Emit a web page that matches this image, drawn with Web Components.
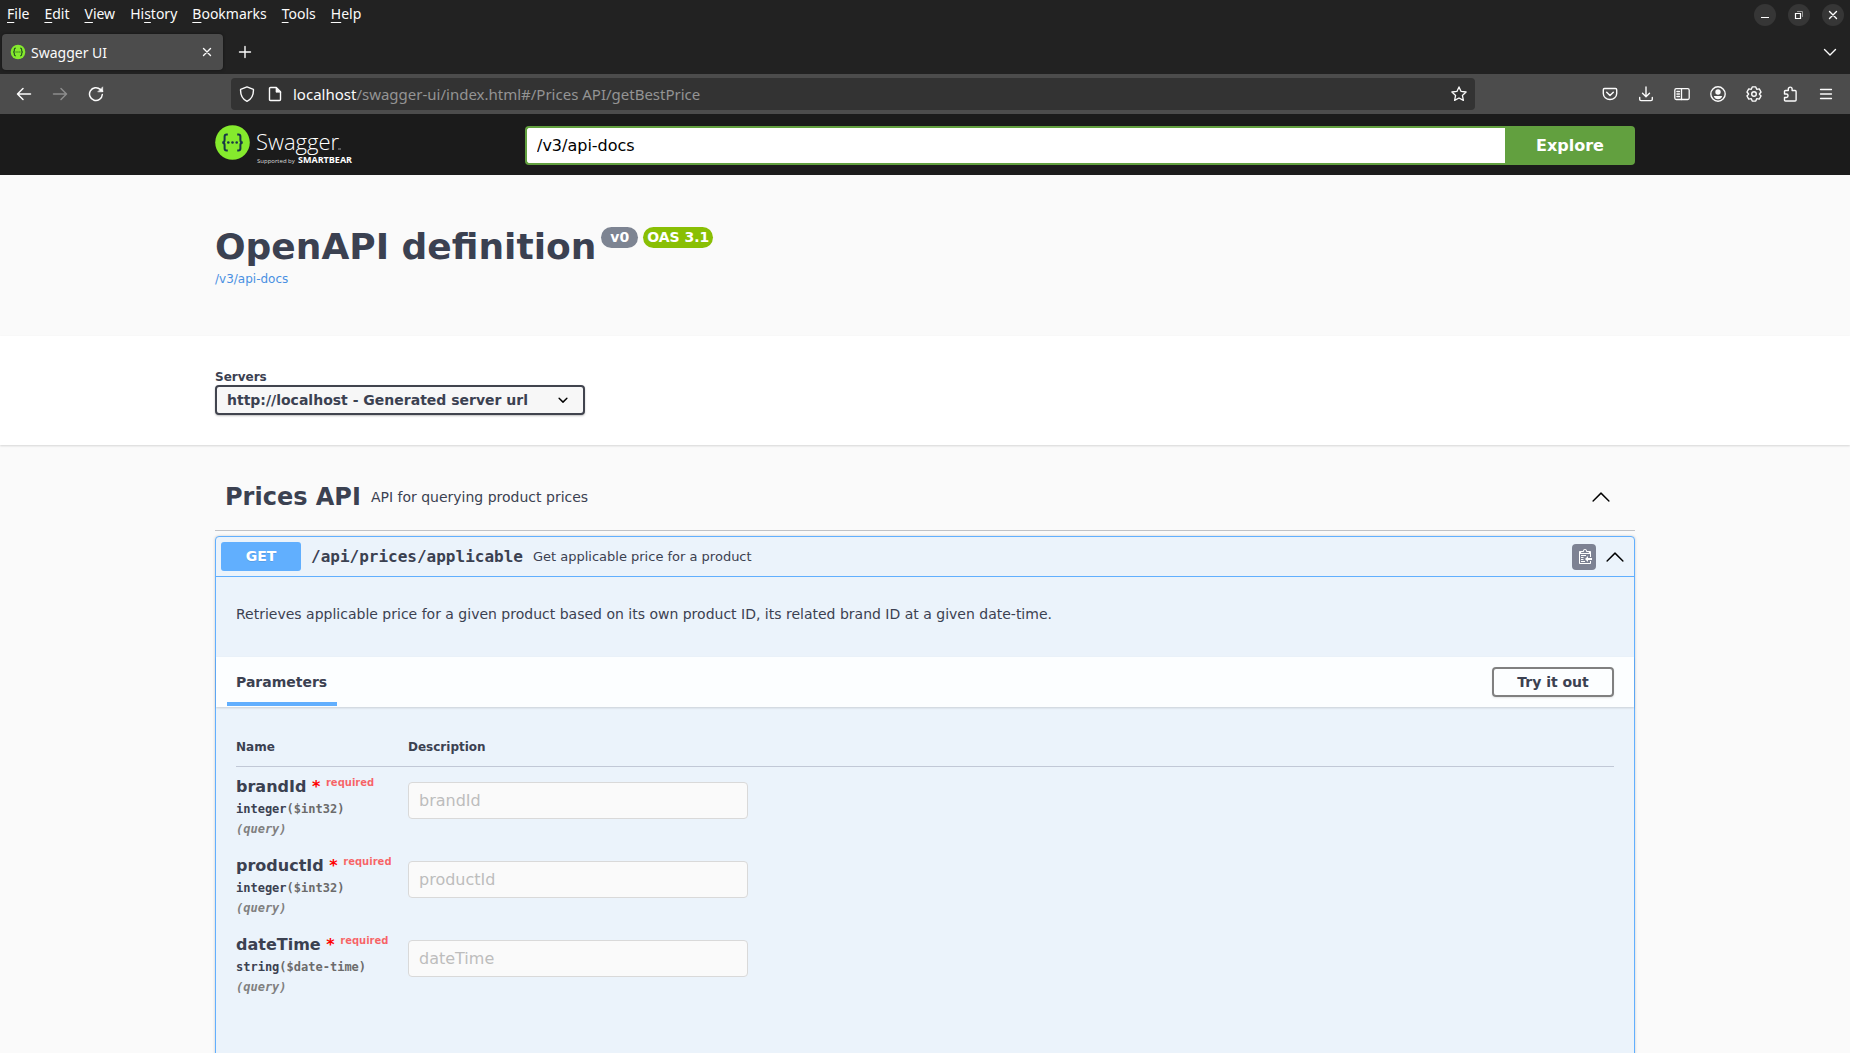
<!DOCTYPE html>
<html lang="en">
<head>
<meta charset="utf-8">
<title>Swagger UI</title>
<style>
  html, body { margin: 0; height: 100%; overflow: hidden; background: #fafafa; }
  body { font-family: "DejaVu Sans", sans-serif; color: #3b4151; }
</style>
</head>
<body>
<browser-window>
  <browser-menu slot="chrome"></browser-menu>
  <browser-tabs slot="chrome">Swagger UI</browser-tabs>
  <browser-toolbar slot="chrome"></browser-toolbar>
  <swagger-topbar></swagger-topbar>
  <api-info>OpenAPI definition</api-info>
  <server-picker></server-picker>
  <api-tag>
    <span slot="name">Prices API</span>
    <span slot="about">API for querying product prices</span>
    <api-operation>
      <span slot="path">/api/prices/applicable</span>
      <span slot="summary">Get applicable price for a product</span>
      <span slot="about">Retrieves applicable price for a given product based on its own product ID, its related brand ID at a given date-time.</span>
    </api-operation>
  </api-tag>
</browser-window>

<template id="browser-window">
  <style>
    :host { display: flex; flex-direction: column; height: 100vh; overflow: hidden; }
    header { flex: none; background: #222; color: #fbfbfb; font-family: "Noto Sans", sans-serif; }
    main { flex: 1; min-height: 0; overflow: hidden; background: #fafafa; }
  </style>
  <header><slot name="chrome"></slot></header>
  <main><slot></slot></main>
</template>

<template id="browser-menu">
  <style>
    :host { display: flex; justify-content: space-between; align-items: center; height: 30px; padding: 0 6px; font-size: 14px; }
    nav, div { display: flex; }
    nav { gap: 15px; padding: 0 0 2px 1px; }
    div { gap: 12px; }
    a { color: inherit; text-decoration: none; line-height: 20px; }
    u { text-underline-offset: 3px; text-decoration-thickness: 1px; }
    button { width: 22px; height: 22px; padding: 0; border: 0; border-radius: 50%; background: #363636; color: #fff; display: grid; place-items: center; }
  </style>
  <nav>
    <a href="#"><u>F</u>ile</a><a href="#"><u>E</u>dit</a><a href="#"><u>V</u>iew</a><a href="#">Hi<u>s</u>tory</a><a href="#"><u>B</u>ookmarks</a><a href="#"><u>T</u>ools</a><a href="#"><u>H</u>elp</a>
  </nav>
  <div>
    <button aria-label="Minimize"><ui-icon name="minimize"></ui-icon></button>
    <button aria-label="Restore"><ui-icon name="restore"></ui-icon></button>
    <button aria-label="Close"><ui-icon name="close"></ui-icon></button>
  </div>
</template>

<template id="browser-tabs">
  <style>
    :host { display: flex; align-items: center; height: 44px; padding: 0 8px 0 2px; font-size: 14px; }
    .tab { display: flex; align-items: center; box-sizing: border-box; width: 221px; height: 36px; padding: 0 4px 0 8px; border-radius: 4px; background: #4c4c4c; box-shadow: 0 0 3px rgba(0,0,0,.5); }
    .title { flex: 1; padding-left: 5px; }
    button { width: 24px; height: 24px; padding: 0; border: 0; background: none; color: #fbfbfb; display: grid; place-items: center; }
    .new { margin-left: 10px; }
    .all { margin-left: auto; }
  </style>
  <div class="tab">
    <ui-icon name="favicon"></ui-icon>
    <span class="title"><slot></slot></span>
    <button aria-label="Close tab"><ui-icon name="close"></ui-icon></button>
  </div>
  <button class="new" aria-label="New tab"><ui-icon name="plus"></ui-icon></button>
  <button class="all" aria-label="List all tabs"><ui-icon name="down"></ui-icon></button>
</template>

<template id="browser-toolbar">
  <style>
    :host { display: flex; align-items: center; height: 40px; padding: 0 6px; background: #4c4c4c; }
    button { flex: none; width: 36px; height: 32px; padding: 0; border: 0; background: none; color: #fbfbfb; display: grid; place-items: center; }
    button:disabled { color: #8c8c8c; }
    .address { flex: 1; display: flex; align-items: center; height: 32px; margin: 0 117px; padding-left: 2px; border-radius: 4px; background: #333; font-size: 15px; }
    .address button { width: 28px; }
    .address .star { width: 32px; }
    .url { flex: 1; padding-left: 4px; color: #949494; white-space: nowrap; }
    b { font-weight: 400; color: #fbfbfb; }
  </style>
  <button aria-label="Back"><ui-icon name="back"></ui-icon></button>
  <button aria-label="Forward" disabled><ui-icon name="forward"></ui-icon></button>
  <button aria-label="Reload"><ui-icon name="reload"></ui-icon></button>
  <div class="address">
    <button aria-label="Tracking protection"><ui-icon name="shield"></ui-icon></button>
    <button aria-label="Site information"><ui-icon name="page"></ui-icon></button>
    <span class="url"><b>localhost</b>/swagger-ui/index.html#/Prices API/getBestPrice</span>
    <button class="star" aria-label="Bookmark"><ui-icon name="star"></ui-icon></button>
  </div>
  <button aria-label="Pocket"><ui-icon name="pocket"></ui-icon></button>
  <button aria-label="Downloads"><ui-icon name="download"></ui-icon></button>
  <button aria-label="Sidebar"><ui-icon name="sidebar"></ui-icon></button>
  <button aria-label="Account"><ui-icon name="account"></ui-icon></button>
  <button aria-label="Settings"><ui-icon name="gear"></ui-icon></button>
  <button aria-label="Extensions"><ui-icon name="puzzle"></ui-icon></button>
  <button aria-label="Menu"><ui-icon name="menu"></ui-icon></button>
</template>

<template id="swagger-topbar">
  <style>
    :host { display: block; background: #1b1b1b; padding: 11px 0 10px; }
    .wrap { display: flex; align-items: flex-end; box-sizing: border-box; max-width: 1460px; margin: 0 auto; padding: 0 20px; }
    .logo { flex: none; width: 310px; height: 40px; }
    .logo svg { display: block; }
    form { flex: 1; display: flex; }
    input { flex: 1; min-width: 0; box-sizing: border-box; height: 39px; margin: 0; padding: 0 10px; border: 2px solid #62a03f; border-right: 0; border-radius: 4px 0 0 4px; background: #fff; color: #000; font: 16px "DejaVu Sans", sans-serif; outline: none; }
    button { width: 130px; border: 0; border-radius: 0 4px 4px 0; background: #62a03f; color: #fff; font: bold 16px "DejaVu Sans", sans-serif; }
  </style>
  <div class="wrap">
    <a class="logo" href="#" aria-label="Swagger">
      <svg width="150" height="42" viewBox="0 0 150 42">
        <circle cx="17.5" cy="17.5" r="17.3" fill="#85ea2d"/>
        <g fill="none" stroke="#173647" stroke-width="2">
          <path d="M12.8 9.6h-1.2q-2 0-2 2v3.400q0 2.500-2.400 2.500q2.400 0 2.400 2.500v3.400q0 2 2 2h1.200"/>
          <path d="M22.200 9.600h1.200q2 0 2 2v3.400q0 2.500 2.400 2.500q-2.400 0-2.400 2.500v3.400q0 2-2 2h-1.200"/>
        </g>
        <g fill="#173647"><circle cx="13.300" cy="17.500" r="1.300"/><circle cx="17.500" cy="17.500" r="1.300"/><circle cx="21.700" cy="17.500" r="1.300"/></g>
        <g fill="#fff" font-family="Open Sans, sans-serif">
          <text x="41" y="25" font-size="22" font-weight="300">Swagger</text>
          <text x="42" y="38" font-size="6" fill="#ddd">Supported by</text>
          <text x="83" y="38" font-size="9" font-weight="700">SMARTBEAR</text>
        </g>
        <path d="M123 24h3" stroke="#999"/>
      </svg>
    </a>
    <form onsubmit="return false">
      <input type="text" aria-label="API definition URL" value="/v3/api-docs">
      <button>Explore</button>
    </form>
  </div>
</template>

<template id="api-info">
  <style>
    :host { display: block; box-sizing: border-box; max-width: 1460px; margin: 0 auto; padding: 51px 20px 49px; }
    .title { display: flex; align-items: flex-start; gap: 5px; }
    h2 { margin: 0; font-size: 36px; line-height: 42px; }
    .pill { margin-top: 1px; border-radius: 11px; padding: 0 9px; background: #7d8492; color: #fff; font-size: 14px; font-weight: 700; line-height: 21px; }
    .oas { background: #89bf04; padding: 0 4px; }
    a { display: block; margin-top: 4px; color: #4990e2; font-size: 12px; line-height: 15px; text-decoration: none; }
  </style>
  <div class="title"><h2><slot></slot></h2><span class="pill">v0</span><span class="pill oas">OAS 3.1</span></div>
  <a href="#">/v3/api-docs</a>
</template>

<template id="server-picker">
  <style>
    :host { display: block; background: #fff; box-shadow: 0 1px 2px rgba(0,0,0,.15); padding: 34px 0 30px; }
    .wrap { box-sizing: border-box; max-width: 1460px; margin: 0 auto; padding: 0 20px; }
    label { display: block; font-size: 12px; font-weight: 700; line-height: 15px; }
    .select { display: inline-grid; vertical-align: top; align-items: center; }
    select, ui-icon { grid-area: 1 / 1; }
    select { appearance: none; box-sizing: border-box; height: 30px; margin: 0; padding: 0 54px 0 10px; border: 2px solid #41444e; border-radius: 4px; background: #f7f7f7; box-shadow: 0 1px 2px rgba(0,0,0,.25); color: #3b4151; font: bold 14px "DejaVu Sans", sans-serif; }
    ui-icon { justify-self: end; margin-right: 12px; color: #000; pointer-events: none; }
  </style>
  <div class="wrap">
    <label for="server">Servers</label>
    <div class="select">
      <select id="server"><option>http://localhost - Generated server url</option></select>
      <ui-icon name="select"></ui-icon>
    </div>
  </div>
</template>

<template id="api-tag">
  <style>
    :host { display: block; box-sizing: border-box; max-width: 1460px; margin: 0 auto; padding: 18px 20px 0; }
    .head { display: flex; align-items: center; gap: 10px; height: 67px; padding: 0 24px 0 10px; border-bottom: 1px solid rgba(59,65,81,.3); margin-bottom: 5px; }
    h3 { margin: 0; font-size: 24px; }
    small { flex: 1; font-size: 14px; }
    button { padding: 0; border: 0; background: none; color: #000; }
  </style>
  <div class="head">
    <h3><slot name="name"></slot></h3>
    <small><slot name="about"></slot></small>
    <button aria-label="Collapse section"><ui-icon name="up"></ui-icon></button>
  </div>
  <slot></slot>
</template>

<template id="api-operation">
  <style>
    :host { display: block; border: 1px solid #61affe; border-radius: 4px; background: #ebf3fb; box-shadow: 0 0 3px rgba(0,0,0,.19); padding-bottom: 120px; }
    .summary { display: flex; align-items: center; gap: 10px; padding: 5px 9px 5px 5px; border-bottom: 1px solid #61affe; }
    .method { width: 80px; border-radius: 3px; background: #61affe; color: #fff; font-size: 14px; font-weight: 700; line-height: 29px; text-align: center; text-shadow: 0 1px 0 rgba(0,0,0,.1); }
    .path { font: bold 16px "DejaVu Sans Mono", monospace; }
    .what { flex: 1; font-size: 13px; }
    .actions { display: flex; align-items: center; gap: 9px; }
    .actions button { padding: 0; border: 0; background: none; color: #000; }
    .actions .copy { display: grid; place-items: center; width: 24px; height: 26px; border-radius: 4px; background: #7d8293; color: #fff; }
    .about { margin: 0; padding: 29px 20px 35px; font-size: 14px; line-height: 16px; }
    .bar { display: flex; justify-content: space-between; align-items: center; height: 49px; padding: 0 20px 1px 11px; background: rgba(255,255,255,.85); box-shadow: 0 1px 2px rgba(0,0,0,.15); }
    h4 { align-self: stretch; margin: 0; padding: 0 10px 0 9px; font-size: 14px; line-height: 50px; box-shadow: inset 0 -4px #61affe; }
    .try { width: 122px; height: 30px; padding: 0; border: 2px solid gray; border-radius: 4px; background: transparent; box-shadow: 0 1px 2px rgba(0,0,0,.1); color: #3b4151; font: bold 14px "DejaVu Sans", sans-serif; }
    .params { padding: 33px 20px 0; }
    table { width: 100%; border-collapse: collapse; }
    th { padding: 0 0 12px; border-bottom: 1px solid #c1c8d6; font-size: 12px; line-height: 14px; text-align: left; }
    th:first-child { width: 172px; }
    td { padding: 10px 0 0; height: 69px; vertical-align: top; }
    label { display: block; font-size: 16px; font-weight: 700; line-height: 19px; white-space: nowrap; }
    i { color: red; font-style: normal; }
    sup { color: rgba(255,0,0,.6); font-size: 10px; line-height: 10px; vertical-align: 6px; }
    .type, .in { font: bold 12px/14px "DejaVu Sans Mono", monospace; }
    .type { padding: 6px 0; }
    .type span { color: #6b6b6b; }
    .in { color: #808080; font-style: italic; }
    input { display: block; box-sizing: border-box; width: 340px; height: 37px; margin: 5px 0 0; padding: 0 10px; border: 1px solid #d9d9d9; border-radius: 4px; background: #fafafa; font: 16px "DejaVu Sans", sans-serif; }
    input::placeholder { color: #bdbdbd; opacity: 1; }
  </style>
  <div class="summary">
    <span class="method">GET</span>
    <span class="path"><slot name="path"></slot></span>
    <span class="what"><slot name="summary"></slot></span>
    <div class="actions">
      <button class="copy" aria-label="Copy to clipboard"><ui-icon name="clipboard"></ui-icon></button>
      <button aria-label="Collapse operation"><ui-icon name="up"></ui-icon></button>
    </div>
  </div>
  <p class="about"><slot name="about"></slot></p>
  <div class="bar"><h4>Parameters</h4><button class="try">Try it out</button></div>
  <div class="params">
    <table>
      <thead><tr><th>Name</th><th>Description</th></tr></thead>
      <tbody></tbody>
    </table>
  </div>
</template>

<script>
const line = (size, body, width = 1.3) =>
  `<svg width="${size}" height="${size}" viewBox="0 0 ${size} ${size}" fill="none" stroke="currentColor" stroke-width="${width}" stroke-linecap="round" stroke-linejoin="round">${body}</svg>`;
const solid = (w, h, body) =>
  `<svg width="${w}" height="${h}" viewBox="0 0 ${w} ${h}" fill="currentColor">${body}</svg>`;

const gearPath = (() => {
  const pts = [];
  for (let i = 0; i < 6; i++) {
    for (const [offset, radius] of [[-30, 5.4], [-14, 7.3], [14, 7.3]]) {
      const a = (i * 60 + offset - 90) * Math.PI / 180;
      pts.push(`${(8 + radius * Math.cos(a)).toFixed(2)} ${(8 + radius * Math.sin(a)).toFixed(2)}`);
    }
  }
  return `M${pts.join('L')}Z`;
})();

const ICONS = {
  minimize: line(12, '<path d="M2 8.500h8" stroke-linecap="butt" stroke-width="1"/>'),
  restore: line(12, '<path d="M2.500 4.500h5v5h-5z" stroke-linejoin="miter"/><path d="M4.500 2.500h5v5" stroke="#999" stroke-width="1"/>', 1.2),
  close: line(12, '<path d="M2.500 2.500l7 7M9.500 2.500l-7 7"/>', 1.4),
  plus: line(14, '<path d="M7 1.500v11M1.500 7h11"/>', 1.4),
  down: line(16, '<path d="M2.500 5.500L8 11l5.500-5.500"/>', 1.4),
  favicon: '<svg width="16" height="16" viewBox="0 0 16 16"><circle cx="8" cy="8" r="7.300" fill="#85ea2d"/><g fill="none" stroke="#24551f" stroke-width="1.200"><path d="M5.800 4.200q-1.500 0-1.500 1.500v1q0 1.300-1.200 1.300q1.200 0 1.200 1.300v1q0 1.500 1.500 1.500M10.200 4.200q1.500 0 1.500 1.500v1q0 1.300 1.200 1.300q-1.200 0-1.200 1.300v1q0 1.500-1.500 1.500"/><path d="M5.500 8h5" stroke-dasharray="1.100 .8"/></g></svg>',
  back: line(16, '<path d="M14.500 8H1.800M7 2.500L1.500 8L7 13.500"/>', 1.5),
  forward: line(16, '<path d="M1.500 8h12.700M9 2.500L14.500 8L9 13.500"/>', 1.5),
  reload: line(16, '<path d="M14.300 8.500a6.400 6.400 0 1 1-2-5.100L14.500 5.300"/><path d="M14.700 1.200v4.600h-4.600z" fill="currentColor" stroke-width=".6"/>', 1.5),
  shield: line(16, '<path d="M8 .9L14.400 3.300c.3 5-1.100 9.500-6.400 12-5.300-2.500-6.700-7-6.400-12z"/>', 1.4),
  page: line(16, '<path d="M3.500 1.500h5.800L13.500 5.700v7.800q0 1-1 1h-9q-1 0-1-1v-11q0-1 1-1z"/><path d="M9 1.500v4.700h4.500z" fill="currentColor" stroke-width=".7"/>', 1.4),
  star: line(16, '<path d="M8 .9l2.100 4.500 5 .6-3.700 3.400 1 5L8 12l-4.400 2.400 1-5L.9 6l5-.6z"/>'),
  pocket: line(16, '<path d="M2.500 2.500h11q1.200 0 1.200 1.200v3.800a6.700 6 0 0 1-13.400 0V3.700q0-1.200 1.200-1.200z"/><path d="M4.700 6.300L8 9.500l3.300-3.200" stroke-width="1.500"/>', 1.4),
  download: line(16, '<path d="M8 1v9.500M4.500 7.200L8 10.700l3.500-3.500M1.700 11.500v1.800q0 1.300 1.300 1.300h10q1.300 0 1.300-1.300v-1.800"/>', 1.4),
  sidebar: line(16, '<rect x=".8" y="2.700" width="14.400" height="10.800" rx="1.500"/><path d="M7.500 2.700v10.800M2.900 5.500h2.600M2.900 8h2.600M2.900 10.500h2.600"/>'),
  account: line(16, '<circle cx="8" cy="8" r="7.200"/><circle cx="8" cy="6" r="2.700" fill="currentColor" stroke="none"/><path d="M3.800 10h8.400q-1 3.200-4.200 3.200T3.800 10z" fill="currentColor" stroke="none"/>', 1.4),
  gear: line(16, `<path d="${gearPath}"/><circle cx="8" cy="8" r="2.300"/>`, 1.4),
  puzzle: line(16, '<path d="M6.300 4.500V3a1.900 1.900 0 0 1 3.800 0v1.500h3q1 0 1 1v8.500q0 1-1 1H3.500q-1 0-1-1v-2.500h1.800a1.700 1.700 0 0 0 0-3.500H2.500V5.500q0-1 1-1z"/>', 1.4),
  menu: line(16, '<path d="M2.500 3.500h11M2.500 8h11M2.500 12.500h11"/>', 1.3),
  up: solid(20, 20, '<path d="M17.418 14.408a.697.697 0 0 0 .979 0 .68.68 0 0 0 0-.969l-7.908-7.830a.697.697 0 0 0-.979 0l-7.908 7.830a.68.68 0 0 0 0 .969.697.697 0 0 0 .979 0L10 7.267z"/>'),
  select: solid(20, 20, '<path d="M13.418 7.859a.695.695 0 0 1 .978 0 .68.68 0 0 1 0 .969l-3.908 3.830a.697.697 0 0 1-.979 0L5.601 8.828a.68.68 0 0 1 0-.969.695.695 0 0 1 .978 0L10 11z"/>'),
  clipboard: solid(15, 16, '<path transform="translate(2 -1)" fill-rule="evenodd" d="M2 13h4v1H2v-1zm5-6H2v1h5V7zm2 3V8l-3 3 3 3v-2h5v-2H9zM4.500 9H2v1h2.500V9zM2 12h2.500v-1H2v1zm9 1h1v2c-.02.28-.11.52-.3.7-.19.18-.42.28-.7.3H1c-.55 0-1-.45-1-1V4c0-.55.45-1 1-1h3c0-1.110.890-2 2-2 1.110 0 2 .890 2 2h3c.55 0 1 .45 1 1v5h-1V6H1v9h10v-2zM2 5h8c0-.55-.45-1-1-1H8c-.55 0-1-.45-1-1s-.45-1-1-1-1 .45-1 1-.45 1-1 1H3c-.55 0-1 .45-1 1z"/>'),
};

class UiIcon extends HTMLElement {
  constructor() {
    super();
    this.attachShadow({ mode: 'open' });
  }
  connectedCallback() {
    this.shadowRoot.innerHTML = `<style>:host{display:block}svg{display:block}</style>${ICONS[this.getAttribute('name')]}`;
  }
}

class TemplateElement extends HTMLElement {
  constructor() {
    super();
    const template = document.getElementById(this.localName);
    this.attachShadow({ mode: 'open' }).append(template.content.cloneNode(true));
  }
}

const PARAMETERS = [
  { name: 'brandId', type: 'integer', format: '$int32' },
  { name: 'productId', type: 'integer', format: '$int32' },
  { name: 'dateTime', type: 'string', format: '$date-time' },
];

class ApiOperation extends TemplateElement {
  constructor() {
    super();
    this.shadowRoot.querySelector('tbody').innerHTML = PARAMETERS.map(p => `
      <tr>
        <td>
          <label for="${p.name}">${p.name} <i>*</i> <sup>required</sup></label>
          <div class="type">${p.type}<span>(${p.format})</span></div>
          <div class="in">(query)</div>
        </td>
        <td><input id="${p.name}" type="text" placeholder="${p.name}" disabled></td>
      </tr>`).join('');
  }
}

customElements.define('ui-icon', UiIcon);
for (const name of ['browser-window', 'browser-menu', 'browser-tabs', 'browser-toolbar', 'swagger-topbar', 'api-info', 'server-picker', 'api-tag']) {
  customElements.define(name, class extends TemplateElement {});
}
customElements.define('api-operation', ApiOperation);
</script>
</body>
</html>
